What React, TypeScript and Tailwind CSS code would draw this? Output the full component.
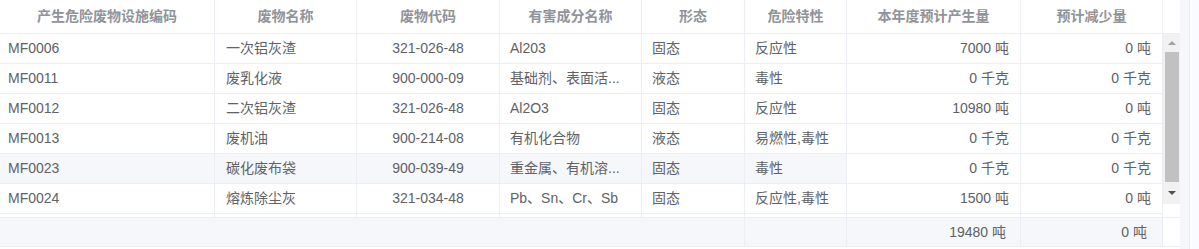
import React from 'react';

interface Row {
  code: string;
  name: string;
  wasteCode: string;
  harmful: string;
  form: string;
  hazard: string;
  produce: string;
  reduce: string;
  hover?: boolean;
}

const rows: Row[] = [
  { code: 'MF0006', name: '一次铝灰渣', wasteCode: '321-026-48', harmful: 'Al203', form: '固态', hazard: '反应性', produce: '7000 吨', reduce: '0 吨' },
  { code: 'MF0011', name: '废乳化液', wasteCode: '900-000-09', harmful: '基础剂、表面活...', form: '液态', hazard: '毒性', produce: '0 千克', reduce: '0 千克' },
  { code: 'MF0012', name: '二次铝灰渣', wasteCode: '321-026-48', harmful: 'Al2O3', form: '固态', hazard: '反应性', produce: '10980 吨', reduce: '0 吨' },
  { code: 'MF0013', name: '废机油', wasteCode: '900-214-08', harmful: '有机化合物', form: '液态', hazard: '易燃性,毒性', produce: '0 千克', reduce: '0 千克' },
  { code: 'MF0023', name: '碳化废布袋', wasteCode: '900-039-49', harmful: '重金属、有机溶...', form: '固态', hazard: '毒性', produce: '0 千克', reduce: '0 千克', hover: true },
  { code: 'MF0024', name: '熔炼除尘灰', wasteCode: '321-034-48', harmful: 'Pb、Sn、Cr、Sb', form: '固态', hazard: '反应性,毒性', produce: '1500 吨', reduce: '0 吨' },
];

const headers = ['产生危险废物设施编码', '废物名称', '废物代码', '有害成分名称', '形态', '危险特性', '本年度预计产生量', '预计减少量'];

const grid = 'grid grid-cols-[215px_142px_143px_142px_103px_102px_174px_142px]';
const cell = 'h-full flex items-center border-r border-[#ebeef5] whitespace-nowrap overflow-hidden';

export default function App() {
  return (
    <div
      className="flex w-[1199px] h-[249px] bg-white text-[14px] text-[#606266]"
      style={{ fontFamily: '"Liberation Sans", "Noto Sans CJK SC", sans-serif' }}
    >
      <div className="w-[1180px] flex flex-col">
        {/* header */}
        <div className="flex h-[34px] border-b border-[#ebeef5]">
          <div className={`${grid} w-[1163px]`}>
            {headers.map(h => (
              <div key={h} className={`${cell} justify-center font-bold text-[#909399]`}>
                {h}
              </div>
            ))}
          </div>
          <div className="w-[17px] bg-white" />
        </div>

        {/* body */}
        <div className="flex h-[183px]">
          <div className="w-[1163px] flex flex-col">
            {rows.map(r => {
              const bg = r.hover ? 'bg-[#f5f7fa]' : 'bg-white';
              return (
                <div key={r.code} className={`${grid} h-[30px] border-b border-[#ebeef5]`}>
                  <div className={`${cell} ${bg} pl-2`}>{r.code}</div>
                  <div className={`${cell} ${bg} pl-[11px]`}>{r.name}</div>
                  <div className={`${cell} ${bg} justify-center`}>{r.wasteCode}</div>
                  <div className={`${cell} ${bg} pl-[10px]`}>{r.harmful}</div>
                  <div className={`${cell} ${bg} pl-[10px]`}>{r.form}</div>
                  <div className={`${cell} ${bg} pl-[10px]`}>{r.hazard}</div>
                  <div className={`${cell} justify-end pr-[11px]`}>{r.produce}</div>
                  <div className={`${cell} justify-end pr-[11px]`}>{r.reduce}</div>
                </div>
              );
            })}
            <div className={`${grid} flex-1`}>
              {headers.map(h => (
                <div key={h} className="border-r border-[#ebeef5]" />
              ))}
            </div>
          </div>

          {/* scrollbar */}
          <div className="w-[17px] bg-[#f1f1f1] flex flex-col items-center">
            <div className="h-[18px] flex items-center justify-center">
              <div className="w-0 h-0 border-x-[4px] border-x-transparent border-b-[4px] border-b-[#a3a3a3]" />
            </div>
            <div className="w-[14px] h-[130px] bg-[#c1c1c1]" />
            <div className="h-[22px] flex items-center justify-center">
              <div className="w-0 h-0 border-x-[4px] border-x-transparent border-t-[4px] border-t-[#505050]" />
            </div>
            <div className="flex-1 w-full bg-white" />
          </div>
        </div>

        {/* footer */}
        <div className="flex h-[30px] border-y border-[#ebeef5]">
          <div className="grid grid-cols-[745px_102px_174px_142px] w-[1163px] bg-[#f5f7fa]">
            <div className="border-r border-[#ebeef5]" />
            <div className="border-r border-[#ebeef5]" />
            <div className={`${cell} justify-end pr-[14px]`}>19480 吨</div>
            <div className={`${cell} justify-end pr-[15px]`}>0 吨</div>
          </div>
          <div className="w-[17px] bg-white" />
        </div>
      </div>
      <div className="w-[10px] bg-[#f5f7fa] border-r border-[#ebeef5]" />
      <div className="flex-1 bg-[#fafbfd]" />
    </div>
  );
}
